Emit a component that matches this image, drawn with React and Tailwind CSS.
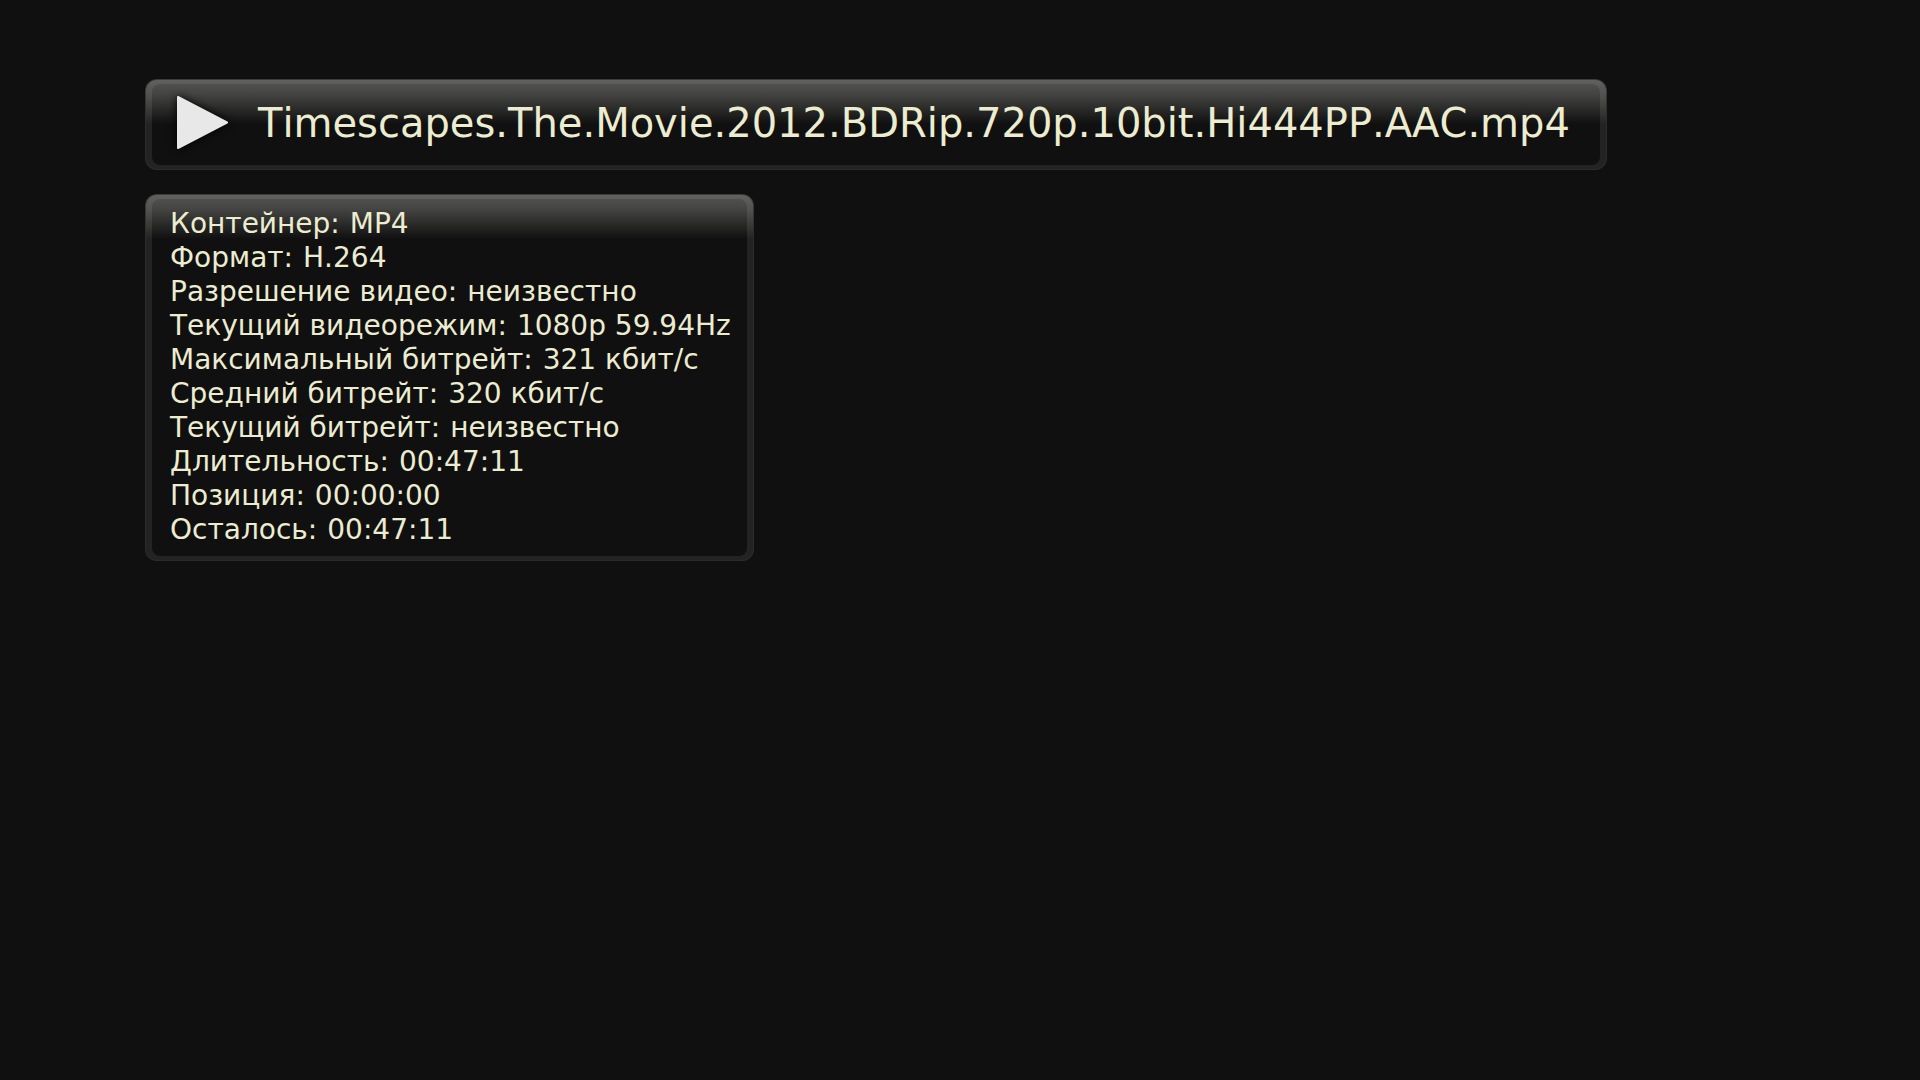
const rows = [
  ["Контейнер", "MP4"],
  ["Формат", "H.264"],
  ["Разрешение видео", "неизвестно"],
  ["Текущий видеорежим", "1080p 59.94Hz"],
  ["Максимальный битрейт", "321 кбит/с"],
  ["Средний битрейт", "320 кбит/с"],
  ["Текущий битрейт", "неизвестно"],
  ["Длительность", "00:47:11"],
  ["Позиция", "00:00:00"],
  ["Осталось", "00:47:11"],
];

function Panel({ children }) {
  return (
    <section className="rounded-xl bg-[linear-gradient(to_bottom,#3c3c3a,#2c2c2c_44px)] p-px">
      <div className="rounded-[11px] bg-[linear-gradient(to_bottom,#61615f,#50504e_16px,#232323_44px)] px-1.5 py-1">
        <div className="rounded-lg bg-[linear-gradient(to_bottom,#50504e,#444442_10px,#101010_40px)]">
          {children}
        </div>
      </div>
    </section>
  );
}

export default function App() {
  return (
    <main className="flex min-h-screen flex-col items-start gap-6 bg-[#101010] pt-[79px] pl-[145px] font-['DejaVu_Sans',sans-serif] text-[#ececd0] [font-kerning:none]">
      <Panel>
        <header className="flex items-center gap-7 pt-3 pr-[30px] pb-[15px] pl-6">
          <svg
            className="h-[54px] w-[54px] overflow-visible drop-shadow-[0_0_4px_#000]"
            viewBox="0 0 54 54"
            aria-hidden="true"
          >
            <path d="M2 1L51 26.5L2 52Z" fill="#e8e8e8" stroke="#e8e8e8" strokeWidth="2" strokeLinejoin="round" />
          </svg>
          <h1 className="text-[40px] leading-[48px] whitespace-nowrap">
            Timescapes.The.Movie.2012.BDRip.720p.10bit.Hi444PP.AAC.mp4
          </h1>
        </header>
      </Panel>
      <Panel>
        <dl className="pt-2 pr-4 pb-[9px] pl-[18px] text-[28px] leading-[34px] whitespace-nowrap">
          {rows.map(([k, v]) => (
            <div key={k} className="flex gap-2.5">
              <dt>{k}:</dt>
              <dd>{v}</dd>
            </div>
          ))}
        </dl>
      </Panel>
    </main>
  );
}
